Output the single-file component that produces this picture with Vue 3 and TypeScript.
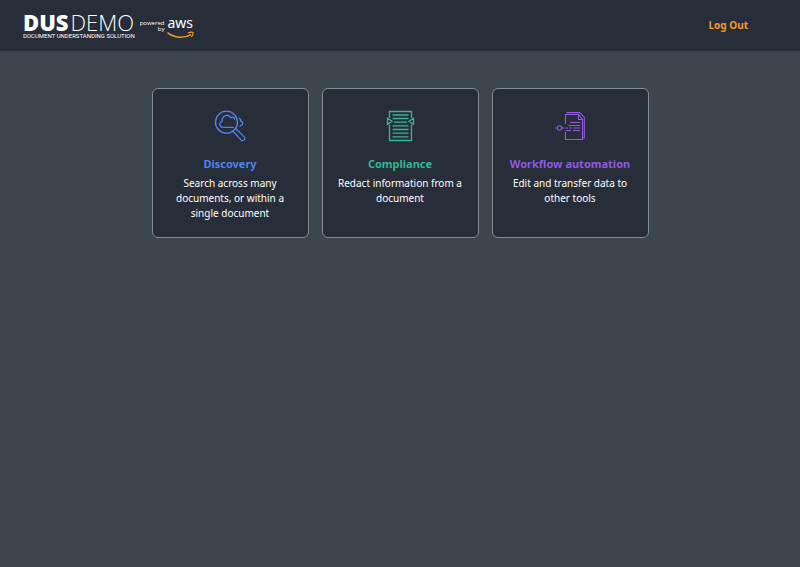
<script setup lang="ts">
type IconName = 'discovery' | 'compliance' | 'workflow'

interface Track {
  title: string
  description: string
  icon: IconName
}

const tracks: Track[] = [
  {
    title: 'Discovery',
    description: 'Search across many documents, or within a single document',
    icon: 'discovery',
  },
  {
    title: 'Compliance',
    description: 'Redact information from a document',
    icon: 'compliance',
  },
  {
    title: 'Workflow automation',
    description: 'Edit and transfer data to other tools',
    icon: 'workflow',
  },
]
</script>

<template>
  <div class="page">
    <header class="header">
      <a class="logo" href="#">
        <span class="brand">
          <span class="brand-name"><b class="dus">DUS</b><span class="demo">DEMO</span></span>
          <span class="brand-sub">DOCUMENT UNDERSTANDING SOLUTION</span>
        </span>
        <span class="powered"><span>powered</span><span>by</span></span>
        <span class="aws">
          <span class="aws-name">aws</span>
          <svg class="smile" width="27" height="8" viewBox="0 0 27 8" fill="none" stroke="#f39a2b">
            <path d="M.5 1.700C7.500 7.400 17 7.600 24 3.600" stroke-width="1.500" />
            <path d="M20.800 2C22.800 1.200 25.300 1 25.900 1.600C26.300 2.400 25.500 4.500 24.300 6" stroke-width="1.200" />
          </svg>
        </span>
      </a>
      <button class="logout" type="button">Log Out</button>
    </header>

    <main class="tracks">
      <a v-for="track in tracks" :key="track.icon" class="card" :class="track.icon" href="#">
        <svg class="icon" viewBox="0 0 32 32" fill="none" stroke="currentColor" stroke-width="1.300">
          <template v-if="track.icon === 'discovery'">
            <circle cx="12.500" cy="12.200" r="11" />
            <path d="M19.800 17.300H9.300C5.300 17.300 4.600 12.500 8 11.500C8 5.300 14 3.300 16.800 7.600C18.600 6.400 20.600 7.600 20.800 9.600" />
            <path d="M24.700 8C26.400 8.600 27 10 26.800 11.100C29.800 12 29.300 15.400 25.600 16.200" />
            <path d="M19 21.300L27 29.900C29.300 31.900 32.200 28.900 30.200 26.900L21.800 18.500" />
          </template>
          <template v-else-if="track.icon === 'compliance'">
            <path d="M5.500 8V1.500H27.500V8M27.500 14.500V30.500H5.500V14.500" />
            <path d="M8.500 5H24.500M8.500 8.500H24.500M10 12.200H23M8.500 15.800H24.500M8.500 19.500H24.500M8.500 23.200H24.500M8.500 26.800H24.500" />
            <path d="M3.500 8.200V14.200L8 11.200ZM29.500 8.200V14.200L25 11.200Z" />
          </template>
          <template v-else>
            <path d="M11.500 14V4.500H24.500L28.500 9.500V29.500H11.500V21.500" stroke-width="1.100" />
            <path d="M12.500 2.600H25.500L30.300 7.200V28H28.500M24.500 4.500V9.500H28.500" stroke-width="1.100" />
            <path d="M16 12.500H26M14.500 15.500H26M12 20.500H17M19 20.500H26" stroke-width="1" />
            <path d="M8 18H10.500M11.500 18H14M15.500 18H18M19.500 18H26M1 18H3" stroke-width="1.100" />
            <circle cx="5.500" cy="18" r="2.200" stroke-width="1.100" />
          </template>
        </svg>
        <h2 class="title">{{ track.title }}</h2>
        <p class="description">{{ track.description }}</p>
      </a>
    </main>
  </div>
</template>

<style>
body {
  background: #3c464f;
}
</style>

<style scoped>
.page {
  min-height: 100vh;
  background: #3c464f;
  color: #fff;
  font-family: "Noto Sans", "Open Sans", sans-serif;
}

.header {
  display: flex;
  align-items: center;
  justify-content: space-between;
  box-sizing: border-box;
  height: 51px;
  padding: 0 52px 2px 23px;
  background: #272d39;
}

.logo {
  display: flex;
  align-items: center;
  padding-top: 2px;
  color: inherit;
  text-decoration: none;
}

.brand {
  display: flex;
  flex-direction: column;
}

.brand-name {
  display: flex;
  gap: 2px;
  font-family: "Open Sans", sans-serif;
  font-size: 22px;
  line-height: 20px;
}

.dus {
  font-weight: 800;
}

.demo {
  font-weight: 300;
}

.brand-sub {
  font-family: Roboto, sans-serif;
  font-size: 6px;
  line-height: 8px;
  white-space: nowrap;
}

.powered {
  display: flex;
  flex-direction: column;
  align-items: flex-end;
  margin-left: 5px;
  font-family: "Open Sans", sans-serif;
  font-size: 6px;
  font-weight: 500;
  line-height: 6px;
}

.aws {
  display: flex;
  flex-direction: column;
  margin-left: 3px;
  padding-top: 3px;
}

.aws-name {
  font-size: 14px;
  line-height: 16px;
}

.smile {
  display: block;
}

.logout {
  padding: 0;
  border: 0;
  background: none;
  color: #f59b23;
  font: 700 10px/16px "Noto Sans", sans-serif;
  cursor: pointer;
}

.tracks {
  display: grid;
  grid-template-columns: repeat(auto-fit, 157px);
  justify-content: center;
  gap: 13px;
  max-width: 600px;
  margin: 0 auto;
  padding: 37px 24px;
}

.card {
  box-sizing: border-box;
  min-height: 150px;
  padding: 21px 12px 15px;
  border: 1px solid #858b92;
  border-radius: 6px;
  background: #272d39;
  color: #fff;
  text-align: center;
  text-decoration: none;
}

.icon {
  display: block;
  width: 32px;
  height: 32px;
  margin: 0 auto 14px;
}

.title {
  margin: 0 0 4px;
  font-size: 11px;
  font-weight: 700;
  line-height: 16px;
}

.description {
  margin: 0;
  font-size: 10px;
  line-height: 15px;
}

.discovery .icon,
.discovery .title {
  color: #5282ea;
}

.compliance .icon,
.compliance .title {
  color: #35b798;
}

.workflow .icon,
.workflow .title {
  color: #8f5ae0;
}
</style>
